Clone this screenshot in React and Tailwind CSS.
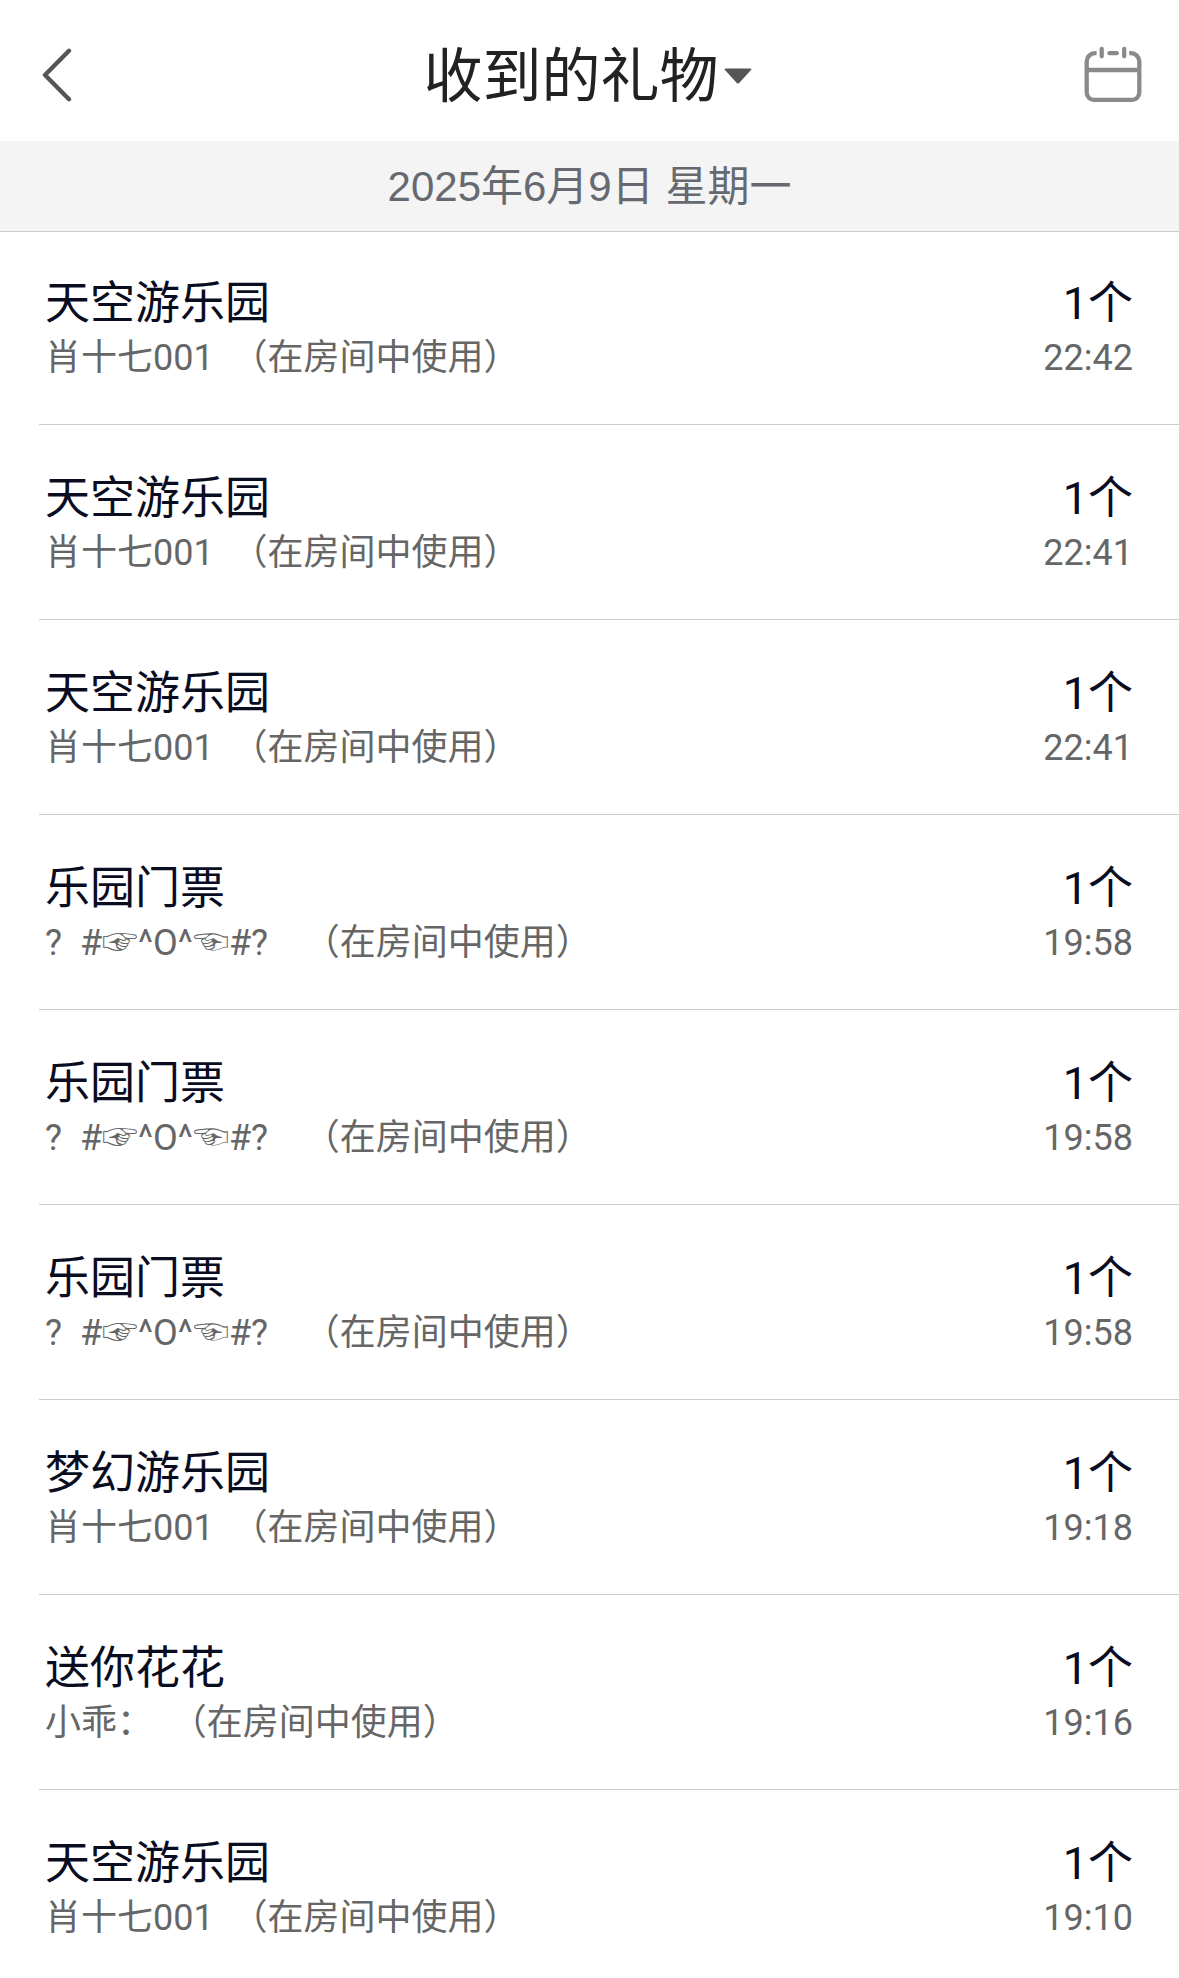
import { useState } from 'react';

const gifts = [
  { id: 1, gift: '天空游乐园', from: '肖十七001', count: 1, time: '22:42' },
  { id: 2, gift: '天空游乐园', from: '肖十七001', count: 1, time: '22:41' },
  { id: 3, gift: '天空游乐园', from: '肖十七001', count: 1, time: '22:41' },
  { id: 4, gift: '乐园门票', from: '?  #☞^O^☜#?  ', count: 1, time: '19:58' },
  { id: 5, gift: '乐园门票', from: '?  #☞^O^☜#?  ', count: 1, time: '19:58' },
  { id: 6, gift: '乐园门票', from: '?  #☞^O^☜#?  ', count: 1, time: '19:58' },
  { id: 7, gift: '梦幻游乐园', from: '肖十七001', count: 1, time: '19:18' },
  { id: 8, gift: '送你花花', from: '小乖：', count: 1, time: '19:16' },
  { id: 9, gift: '天空游乐园', from: '肖十七001', count: 1, time: '19:10' },
];

function BackIcon() {
  return (
    <svg className="h-14 w-9" viewBox="0 0 36 56" fill="none" stroke="#555555" aria-hidden="true">
      <path strokeLinecap="round" strokeLinejoin="round" strokeWidth={4.4} d="M32 4.8L8 29l24 24.2" />
    </svg>
  );
}

function CalendarIcon() {
  return (
    <svg className="h-14 w-[58px]" viewBox="0 0 58 56" fill="none" stroke="#8a8a8a" strokeWidth={4.3} aria-hidden="true">
      <path d="M12.6 7.2H11a8.3 8.3 0 0 0-8.3 8.3v31a7.3 7.3 0 0 0 7.3 7.3h38a7.3 7.3 0 0 0 7.3-7.3v-31A8.3 8.3 0 0 0 47 7.2h-1.8" />
      <path d="M2.7 24h52.6" />
      <path strokeLinecap="round" d="M17.7 2.9v7.4M40.2 2.9v7.4M25.4 7.2h7.4" />
    </svg>
  );
}

function GiftRow({ item }) {
  return (
    <li className="ml-[39px] flex justify-between border-b border-[#cccccc] pt-[44px] pr-[46px] pb-[42px] pl-[6px] first:pt-[42px] last:border-b-0 last:pb-6">
      <div>
        <h2 className="text-[45px] leading-[60px] text-[#0a0d1f]">{item.gift}</h2>
        <p className="text-[36px] leading-[48px] whitespace-pre text-[#666666]">
          {`${item.from}  （在房间中使用）`}
        </p>
      </div>
      <div className="text-right">
        <p className="text-[45px] leading-[60px] text-[#0a0d1f]">{`${item.count}个`}</p>
        <time className="block text-[36px] leading-[48px] text-[#666666]">{item.time}</time>
      </div>
    </li>
  );
}

export default function App() {
  const [open, setOpen] = useState(false);

  return (
    <div className="min-h-screen bg-white font-['Roboto','Noto_Sans_CJK_SC',sans-serif]" lang="zh-CN">
      {/* Top bar */}
      <header className="grid h-[141px] grid-cols-[1fr_auto_1fr] items-center px-[37px] pt-[6px]">
        <button type="button" aria-label="返回" className="justify-self-start">
          <BackIcon />
        </button>
        <button
          type="button"
          aria-expanded={open}
          onClick={() => setOpen(!open)}
          className="flex items-center gap-[5px] pr-1"
        >
          <h1 className="pb-1 font-['Noto_Sans_CJK_SC',sans-serif] text-[59px] leading-[80px] text-[#222222]">收到的礼物</h1>
          <svg className="h-5 w-7" viewBox="0 0 28 20" fill="#555555" aria-hidden="true">
            <path d="M2 4.5h24q2.4 0 .8 1.8L15.2 19q-1.2 1.2-2.4 0L1.2 6.3Q-.4 4.5 2 4.5z" />
          </svg>
        </button>
        <button type="button" aria-label="选择日期" className="justify-self-end">
          <CalendarIcon />
        </button>
      </header>

      {/* Date */}
      <p className="border-b border-[#cccccc] bg-[#f4f4f4] pt-4 pb-[14px] text-center font-['Liberation_Sans','Noto_Sans_CJK_SC',sans-serif] text-[42px] leading-[60px] text-[#666a70]">
        2025年6月9日 星期一
      </p>

      <ul>
        {gifts.map((item) => (
          <GiftRow key={item.id} item={item} />
        ))}
      </ul>
    </div>
  );
}
